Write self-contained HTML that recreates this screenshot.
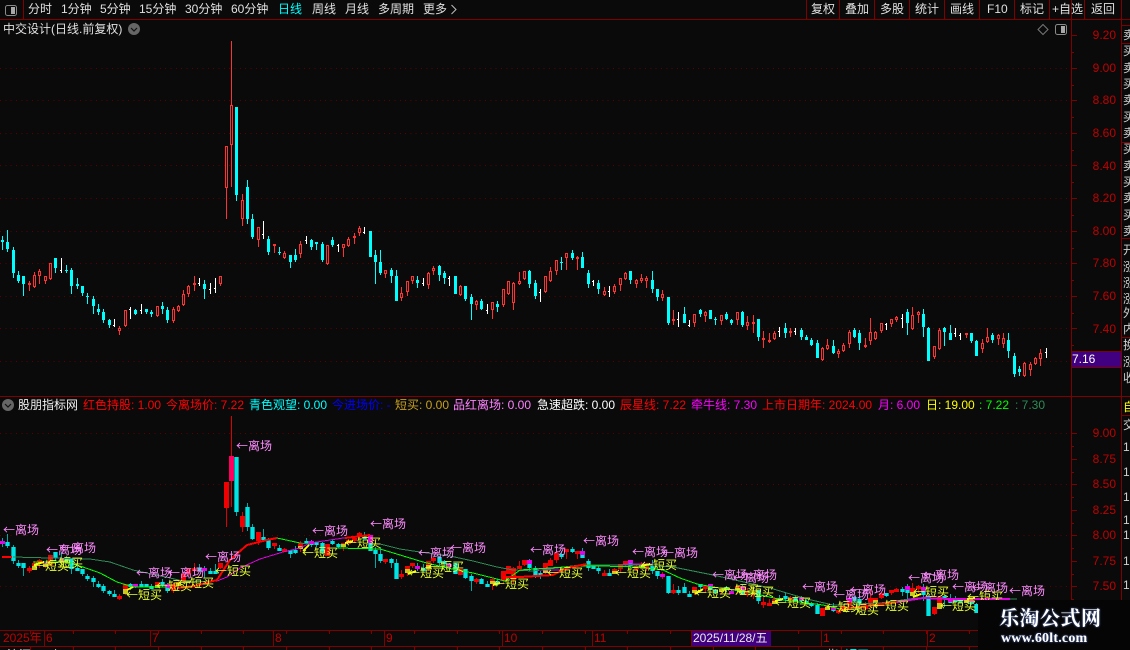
<!DOCTYPE html>
<html>
<head>
<meta charset="utf-8">
<style>
html,body{margin:0;padding:0;background:#0a0a0a;}
#p{position:relative;width:1130px;height:650px;overflow:hidden;background:#0a0a0a;font:12px/14px "Liberation Sans","WenQuanYi Zen Hei","Noto Sans CJK SC",sans-serif;color:#e0e0e0;}
#p svg{position:absolute;left:0;top:0;}
.t{position:absolute;white-space:nowrap;line-height:14px;}
.a{color:#c00000;text-align:right;width:30px;left:1086px;}
.l{color:#ff8cff;font-family:"WenQuanYi Zen Hei","Noto Sans CJK SC",sans-serif;}
.b{color:#e6ff30;font-family:"WenQuanYi Zen Hei","Noto Sans CJK SC",sans-serif;}
.z{color:#c00000;}
#rc{position:absolute;left:1122px;top:20px;width:8px;height:630px;overflow:hidden;color:#d0d0d0;}
#rc span{position:absolute;left:1px;line-height:14px;white-space:nowrap;}
#wm{position:absolute;left:978px;top:600px;width:152px;height:50px;background:#050505;}
</style>
</head>
<body>
<div id="p">
<svg id="s" width="1130" height="650" shape-rendering="crispEdges">
<g stroke="#5c0000" stroke-dasharray="1 4.33" fill="none">
<path d="M0 68.5H1070M0 100.5H1070M0 133.5H1070M0 165.5H1070M0 198.5H1070M0 231.5H1070M0 263.5H1070M0 296.5H1070M0 328.5H1070M0 361.5H1070M0 433.5H1070M0 484.5H1070M0 535.5H1070M0 586.5H1070"/>
</g>
<g id="cu"></g>
<g id="cl"></g>
<g fill="none">
<path stroke="#2e8b57" stroke-width="1" d="M13 557L50 558L90 559L110 562L133 570L170 578L187 582L217 581M277 538L300 543L310 544M380 544L400 549L420 552L450 556L473 561L497 567L513 570L533 571L580 565L593 565L640 565L673 567L713 575L757 585L770 588L807 599L833 605L880 603L917 598L1017 599"/>
<path stroke="#00ff00" stroke-width="1" d="M33 562L67 562L83 567L100 573L117 582L133 587L167 587M277 538L300 543M337 548L380 549L400 555L423 562L447 568L473 573L493 578L505 581L520 570L580 566L600 566L640 567L663 570L680 578L697 584L713 587L747 592L783 600L823 605L840 609M925 598L1010 600"/>
<path stroke="#e000e0" stroke-width="1" d="M217 581L227 577L240 568L260 559L283 552L300 548L310 543L350 537L367 535M537 570L560 570L567 568M623 564L653 564"/>
<path stroke="#e000e0" stroke-width="2" d="M897 602L923 598L950 599L1010 599"/>
<path stroke="#ff0000" stroke-width="2" d="M2 557L12 557M177 588L195 586L213 581L217 580L230 560L247 545L267 540L277 538M345 538L370 535M503 577L520 577L553 575L567 568L587 564M840 609L867 606L897 602"/>
<path stroke="#ffff00" stroke-width="2" d="M34 565L44 562M127 590L133 587M303 551L309 545M345 543L353 541M408 574L416 571M493 585L500 583M641 566L650 564M695 594L703 589M775 601L783 599M913 597L921 594M967 599L975 598"/>
</g>
<g fill="none" stroke="#800000">
<path d="M0 19.5H1130M23.5 0V19M806.5 0V19M839.5 0V19M874.5 0V19M909.5 0V19M944.5 0V19M979.5 0V19M1014.5 0V19M1049.5 0V19M1084.5 0V19M1121.5 0V650M1071.5 0V630M0 396.5H1130M0 630.5H1130M0 646.5H1130M44.5 630V646M150.5 630V646M273.5 630V646M384.5 630V646M502.5 630V646M592.5 630V646M691.5 630V646M821.5 630V646M927.5 630V646M1121 25.5H1130M1121 43.5H1130M1121 142.5H1130M1121 238.5H1130M1121 337.5H1130M1121 415.5H1130"/>
<path id="tk" d=""/>
</g>
<rect x="692" y="631" width="79" height="15" fill="#400080"/>
<rect x="1072" y="352" width="49" height="15" fill="#400080"/>
<path d="M1071 351.5H1121M1071 367.5H1121" stroke="#800000" fill="none"/>
<g shape-rendering="auto">
<rect x="5.5" y="5.5" width="11" height="10" rx="2" fill="none" stroke="#8a8a8a"/>
<rect x="11" y="7" width="4" height="7" fill="#a8a8a8"/>
<rect x="1055.5" y="24.5" width="11" height="10" rx="2" fill="none" stroke="#8a8a8a"/>
<rect x="1061" y="26" width="4" height="7" fill="#a8a8a8"/>
<path d="M1043 24.5L1048 29.5L1043 34.5L1038 29.5Z" fill="none" stroke="#777"/>
<circle cx="134" cy="29" r="6" fill="#666"/>
<path d="M131 28L134 31L137 28" fill="none" stroke="#111" stroke-width="1.2"/>
<circle cx="8" cy="405" r="6" fill="#666"/>
<path d="M5 404L8 407L11 404" fill="none" stroke="#111" stroke-width="1.2"/>
<path d="M451.5 5L456 9.5L451.5 14" fill="none" stroke="#bdbdbd"/>
</g>
</svg>

<!-- toolbar -->
<span class="t" style="left:28px;top:2px">分时</span>
<span class="t" style="left:61px;top:2px">1分钟</span>
<span class="t" style="left:100px;top:2px">5分钟</span>
<span class="t" style="left:139px;top:2px">15分钟</span>
<span class="t" style="left:185px;top:2px">30分钟</span>
<span class="t" style="left:231px;top:2px">60分钟</span>
<span class="t" style="left:278px;top:2px;color:#00ffff">日线</span>
<span class="t" style="left:312px;top:2px">周线</span>
<span class="t" style="left:345px;top:2px">月线</span>
<span class="t" style="left:378px;top:2px">多周期</span>
<span class="t" style="left:423px;top:2px">更多</span>
<span class="t" style="left:811px;top:2px">复权</span>
<span class="t" style="left:845px;top:2px">叠加</span>
<span class="t" style="left:880px;top:2px">多股</span>
<span class="t" style="left:915px;top:2px">统计</span>
<span class="t" style="left:950px;top:2px">画线</span>
<span class="t" style="left:987px;top:2px">F10</span>
<span class="t" style="left:1020px;top:2px">标记</span>
<span class="t" style="left:1052px;top:2px">+自选</span>
<span class="t" style="left:1091px;top:2px">返回</span>

<span class="t" style="left:3px;top:22px">中交设计(日线.前复权)</span>

<!-- upper axis -->
<span class="t a" style="top:28px">9.20</span>
<span class="t a" style="top:61px">9.00</span>
<span class="t a" style="top:93px">8.80</span>
<span class="t a" style="top:126px">8.60</span>
<span class="t a" style="top:159px">8.40</span>
<span class="t a" style="top:191px">8.20</span>
<span class="t a" style="top:224px">8.00</span>
<span class="t a" style="top:256px">7.80</span>
<span class="t a" style="top:289px">7.60</span>
<span class="t a" style="top:322px">7.40</span>
<span class="t" style="left:1072px;top:352px;color:#fff">7.16</span>

<!-- lower axis -->
<span class="t a" style="top:426px">9.00</span>
<span class="t a" style="top:452px">8.75</span>
<span class="t a" style="top:477px">8.50</span>
<span class="t a" style="top:503px">8.25</span>
<span class="t a" style="top:528px">8.00</span>
<span class="t a" style="top:554px">7.75</span>
<span class="t a" style="top:579px">7.50</span>

<!-- legend -->
<span class="t" style="left:18px;top:398px;color:#f0f0f0">股朋指标网</span>
<span class="t" style="left:83px;top:398px;color:#ff0000">红色持股: 1.00</span>
<span class="t" style="left:166px;top:398px;color:#ff0000">今离场价: 7.22</span>
<span class="t" style="left:249px;top:398px;color:#00ffff">青色观望: 0.00</span>
<span class="t" style="left:332px;top:398px;color:#0000ff">今进场价: -</span>
<span class="t" style="left:395px;top:398px;color:#c8a020">短买: 0.00</span>
<span class="t" style="left:453px;top:398px;color:#ff80ff">品红离场: 0.00</span>
<span class="t" style="left:537px;top:398px;color:#ffffff">急速超跌: 0.00</span>
<span class="t" style="left:620px;top:398px;color:#ff0000">辰星线: 7.22</span>
<span class="t" style="left:691px;top:398px;color:#ff00ff">牵牛线: 7.30</span>
<span class="t" style="left:762px;top:398px;color:#ff0000">上市日期年: 2024.00</span>
<span class="t" style="left:878px;top:398px;color:#ff00ff">月: 6.00</span>
<span class="t" style="left:926px;top:398px;color:#ffff00">日: 19.00</span>
<span class="t" style="left:979px;top:398px;color:#00ff00">: 7.22</span>
<span class="t" style="left:1015px;top:398px;color:#2e8b57">: 7.30</span>

<!-- leave labels -->
<span class="t l" style="left:236px;top:439px">←离场</span>
<span class="t l" style="left:3px;top:523px">←离场</span>
<span class="t l" style="left:46px;top:543px">←离场</span>
<span class="t l" style="left:60px;top:541px">←离场</span>
<span class="t l" style="left:136px;top:566px">←离场</span>
<span class="t l" style="left:168px;top:566px">←离场</span>
<span class="t l" style="left:205px;top:550px">←离场</span>
<span class="t l" style="left:312px;top:524px">←离场</span>
<span class="t l" style="left:370px;top:517px">←离场</span>
<span class="t l" style="left:418px;top:546px">←离场</span>
<span class="t l" style="left:450px;top:541px">←离场</span>
<span class="t l" style="left:530px;top:543px">←离场</span>
<span class="t l" style="left:583px;top:534px">←离场</span>
<span class="t l" style="left:632px;top:545px">←离场</span>
<span class="t l" style="left:662px;top:546px">←离场</span>
<span class="t l" style="left:712px;top:568px">←离场</span>
<span class="t l" style="left:733px;top:571px">←离场</span>
<span class="t l" style="left:741px;top:568px">←离场</span>
<span class="t l" style="left:802px;top:580px">←离场</span>
<span class="t l" style="left:833px;top:588px">←离场</span>
<span class="t l" style="left:850px;top:583px">←离场</span>
<span class="t l" style="left:908px;top:571px">←离场</span>
<span class="t l" style="left:923px;top:568px">←离场</span>
<span class="t l" style="left:952px;top:580px">←离场</span>
<span class="t l" style="left:972px;top:581px">←离场</span>
<span class="t l" style="left:1009px;top:584px">←离场</span>

<!-- buy labels -->
<span class="t b" style="left:33px;top:559px">←短买</span>
<span class="t b" style="left:47px;top:556px">←短买</span>
<span class="t b" style="left:126px;top:588px">←短买</span>
<span class="t b" style="left:156px;top:579px">←短买</span>
<span class="t b" style="left:178px;top:576px">←短买</span>
<span class="t b" style="left:215px;top:564px">←短买</span>
<span class="t b" style="left:302px;top:546px">←短买</span>
<span class="t b" style="left:345px;top:536px">←短买</span>
<span class="t b" style="left:408px;top:566px">←短买</span>
<span class="t b" style="left:428px;top:560px">←短买</span>
<span class="t b" style="left:493px;top:577px">←短买</span>
<span class="t b" style="left:547px;top:566px">←短买</span>
<span class="t b" style="left:615px;top:566px">←短买</span>
<span class="t b" style="left:641px;top:558px">←短买</span>
<span class="t b" style="left:695px;top:586px">←短买</span>
<span class="t b" style="left:723px;top:583px">←短买</span>
<span class="t b" style="left:738px;top:585px">←短买</span>
<span class="t b" style="left:775px;top:596px">←短买</span>
<span class="t b" style="left:826px;top:600px">←短买</span>
<span class="t b" style="left:843px;top:603px">←短买</span>
<span class="t b" style="left:873px;top:599px">←短买</span>
<span class="t b" style="left:913px;top:585px">←短买</span>
<span class="t b" style="left:940px;top:599px">←短买</span>
<span class="t b" style="left:967px;top:590px">←短买</span>

<!-- time axis -->
<span class="t z" style="left:3px;top:631px">2025年</span>
<span class="t z" style="left:46px;top:631px">6</span>
<span class="t z" style="left:152px;top:631px">7</span>
<span class="t z" style="left:275px;top:631px">8</span>
<span class="t z" style="left:386px;top:631px">9</span>
<span class="t z" style="left:504px;top:631px">10</span>
<span class="t z" style="left:594px;top:631px">11</span>
<span class="t" style="left:693px;top:631px;color:#e8e8e8">2025/11/28/五</span>
<span class="t z" style="left:823px;top:631px">1</span>
<span class="t z" style="left:929px;top:631px">2</span>
<span class="t" style="left:7px;top:648px;color:#d0d0d0">沪深</span>
<span class="t" style="left:50px;top:648px;color:#d0d0d0">上</span>
<span class="t" style="left:827px;top:648px;color:#d0d0d0">指</span>
<span class="t" style="left:845px;top:648px;color:#00ffff">短买</span>

<!-- right column -->
<div id="rc">
<span style="top:8px">卖</span><span style="top:24px">买</span><span style="top:41px">卖</span><span style="top:57px">买</span><span style="top:73px">卖</span><span style="top:90px">买</span><span style="top:106px">卖</span><span style="top:122px">买</span><span style="top:139px">卖</span><span style="top:155px">买</span><span style="top:171px">卖</span><span style="top:188px">买</span><span style="top:204px">卖</span><span style="top:223px">开</span><span style="top:240px">涨</span><span style="top:256px">涨</span><span style="top:272px">涨</span><span style="top:286px">外</span><span style="top:302px">内</span><span style="top:318px">换</span><span style="top:335px">涨</span><span style="top:351px">收</span>
<span style="top:380px;color:#ffff00">自</span><span style="top:398px">交</span>
<span style="top:420px">1</span><span style="top:445px">1</span><span style="top:470px">1</span><span style="top:493px">1</span><span style="top:508px">1</span><span style="top:534px">1</span><span style="top:558px">1</span>
</div>

<!-- watermark -->
<div id="wm"></div>
<span class="t" style="left:999px;top:607px;line-height:24px;font-family:'Liberation Serif','Noto Serif CJK SC',serif;font-weight:bold;font-size:20px;letter-spacing:.5px;color:#fff;text-shadow:0 0 2px #5a78c8">乐淘公式网</span>
<span class="t" style="left:1001px;top:632px;font-family:'Liberation Serif',serif;font-weight:bold;font-size:14px;letter-spacing:.2px;color:#fff;text-shadow:0 0 2px #5a78c8">www.60lt.com</span>
</div>

<script>
var D="c2,236,240,242,250;c7,230,242,249,252;c13,247,250,273,278;c18,271,275,281,283;c23,276,276,284,296;r29,281,283,285,291;r34,272,275,287,287;r39,269,271,276,284;r45,276,276,281,284;r50,263,263,279,280;c55,258,258,268,273;w61,258,270,271,273;c66,265,270,271,273;c71,268,270,286,294;c77,278,284,286,289;c82,286,286,293,296;c87,293,296,297,304;c93,296,299,306,314;c98,304,309,312,315;c103,309,312,320,323;c109,319,320,325,328;w114,319,325,326,327;r119,326,328,331,335;r125,310,310,326,327;w130,307,309,310,319;c135,309,310,314,315;w141,304,310,311,314;c146,309,309,312,314;c151,310,312,314,317;r157,306,306,316,316;c162,302,306,309,314;c167,307,310,320,323;r173,307,309,321,323;r178,305,306,311,312;r183,290,294,305,306;r188,285,286,294,297;r194,276,283,285,291;w199,278,283,284,286;c204,280,284,289,299;w210,283,289,290,294;w215,278,288,289,293;r220,276,276,284,286;r226,146,146,188,219;r231,41,105,145,187;c236,107,107,195,201;r242,194,200,219,226;c247,180,187,219,224;c252,214,219,237,239;r258,227,227,240,247;w263,221,234,235,239;c268,236,239,252,255;r274,244,244,246,253;c279,247,252,253,255;r284,251,253,258,258;c290,255,255,262,268;c295,249,255,260,262;r300,241,244,254,258;w306,236,240,241,244;c311,239,240,247,250;c316,242,242,244,250;c322,242,244,260,262;r327,245,245,264,264;c332,237,240,245,247;w338,244,245,246,252;r343,244,244,248,257;r348,237,239,246,246;r354,233,236,238,244;r359,226,228,233,236;w364,227,232,233,234;c370,231,231,257,257;c375,250,255,262,284;c380,250,262,273,275;r385,270,270,274,278;c391,268,270,276,283;c396,270,276,301,301;r401,287,293,298,301;r407,281,281,292,296;r412,276,276,281,284;c417,276,280,283,288;w423,278,283,284,286;r428,272,273,285,289;r433,266,268,271,275;c439,265,266,275,281;c444,271,273,278,284;w449,276,278,279,286;c455,276,276,294,294;r460,285,286,295,295;c465,286,286,299,301;c471,294,297,304,320;r476,300,301,305,310;c481,299,301,309,310;w487,304,310,311,314;r492,302,302,310,319;c497,301,304,307,312;r503,289,289,305,307;r508,281,281,294,294;r513,282,283,303,310;r519,272,281,284,284;r524,271,271,279,280;c529,270,271,284,288;c535,280,283,296,299;w540,289,292,293,302;r545,276,276,292,293;r550,267,271,281,281;r556,260,260,271,275;c561,257,262,263,270;r566,253,253,258,270;c572,250,253,258,260;r577,256,257,259,270;c582,252,257,268,268;c588,270,273,284,288;w593,280,281,282,286;c598,280,283,289,294;r604,287,291,295,296;w609,286,291,292,297;r614,284,286,292,294;r620,278,278,285,291;r625,272,273,279,280;c630,271,271,280,284;r636,279,280,284,288;r641,274,278,281,283;r646,276,278,281,288;c652,271,280,289,293;c657,289,289,297,301;r662,290,294,298,301;c668,297,297,323,325;r673,310,319,321,325;w678,312,319,320,327;c684,307,314,323,323;w689,320,325,326,327;r694,314,314,323,327;c700,309,310,314,317;r705,311,312,316,322;c710,310,310,319,319;c715,317,319,320,325;r721,315,315,321,325;c726,312,314,319,320;c731,319,320,323,325;r737,312,312,320,325;c742,311,312,325,327;r747,316,322,326,330;r753,315,322,324,333;c758,319,319,337,341;r763,331,338,340,348;r769,333,340,342,342;r774,331,333,339,339;w779,327,331,332,337;c785,323,328,333,338;r790,328,331,333,337;w795,328,331,332,335;c801,328,330,337,340;c806,335,337,340,340;c811,338,340,345,346;c817,340,343,358,358;r822,347,348,360,361;r827,339,345,349,350;c833,340,346,353,354;r838,349,351,354,358;r843,343,345,351,352;r849,330,332,344,348;c854,328,330,337,338;c859,330,333,343,350;r865,338,345,347,347;r870,318,332,341,345;r875,331,332,339,340;r881,323,323,331,333;w886,323,324,325,330;r891,319,319,324,327;r896,316,317,320,322;w902,314,318,319,328;c907,309,312,323,335;r912,307,315,329,329;r918,311,312,315,323;c923,309,314,327,337;c928,327,328,361,361;r934,346,346,357,359;r939,328,330,349,350;c944,327,328,332,346;c950,325,333,340,340;w955,328,333,334,337;w960,333,335,336,340;r966,333,333,335,338;c971,333,333,341,343;c976,340,341,356,356;r982,339,343,349,353;r987,328,337,342,343;c992,333,335,340,343;r998,334,335,339,345;r1003,333,338,344,348;c1008,333,340,351,358;c1014,353,356,374,377;c1019,366,369,372,376;r1024,362,363,376,377;r1030,362,364,370,376;r1035,357,358,364,364;r1040,349,353,359,366;w1046,348,352,353,358";
var U="",L="";
function R(x,y,w,h,f){return '<rect x="'+x+'" y="'+y+'" width="'+w+'" height="'+Math.max(h,1)+'" fill="'+f+'"/>';}
function M(y){return Math.round(535+(y-231)*0.6258);}
var leave=[3,46,60,136,168,205,312,370,418,450,530,583,632,662,712,733,741,802,833,850,908,923,952,972,1009];
var buy=[33,47,126,156,178,215,302,345,408,428,493,547,615,641,695,723,738,775,826,843,873,913,940,967];
D.split(";").forEach(function(s){
 var k=s[0],v=s.slice(1).split(",").map(Number),x=v[0],wt=v[1],bt=v[2],bb=v[3],wb=v[4];
 var red="#ff3232",lc=k=="c"?"#00ffff":k=="r"?red:"#ffffff";
 if(k=="c"){U+=R(x,wt,1,wb-wt,lc)+R(x-1,bt,3,bb-bt,lc);}
 else if(k=="w"){U+=R(x,wt,1,wb-wt,lc)+R(x-1,bt,1,1,lc);}
 else{
  U+=R(x,wt,1,bt-wt,lc)+R(x,bb,1,wb-bb,lc);
  if(bb-bt<=2)U+=R(x-1,bt,3,bb-bt,lc);
  else U+=R(x-1,bt,3,1,lc)+R(x-1,bb-1,3,1,lc)+R(x-1,bt,1,bb-bt,lc)+R(x+1,bt,1,bb-bt,lc);
 }
 var a=M(wt),b=M(bt),c=M(bb),d=M(wb),h=Math.max(c-b,3);
 var isr=k=="r";
 var lw=isr?"#e00000":"#00a8a8";
 L+=R(x,a,1,d-a,lw);
 if(isr){L+=R(x-2,b,5,h,"#f00000");}
 else{L+=R(x-2,b,5,h,"#009a9a")+R(x-1,b,3,h,"#00e4e4");}
 if(isr&&x==231)L+=R(x-2,b,5,h,"#ff0060");
 if(leave.some(function(q){return Math.abs(q-x)<=2;}))L+=R(x-2,b,5,Math.max(Math.ceil(h/2),3),"#e800e8");
 if(isr&&buy.some(function(q){return Math.abs(q-x)<=2;}))L+=R(x-2,b+Math.floor(h/2),5,Math.max(Math.ceil(h/2),3),"#c8c820");
});
document.getElementById("cu").innerHTML=U;
document.getElementById("cl").innerHTML=L;
var T="";
[35,68,100,133,165,198,231,263,296,328].forEach(function(y){T+="M1071 "+(y+.5)+"h6M1071 "+(y+17)+".5h3";});
[433,459,484,510,535,561,586].forEach(function(y){T+="M1071 "+(y+.5)+"h6M1071 "+(y+13)+".5h3";});
for(var i=0;i<25;i++){var x=30+i*42.67;T+="M"+(Math.round(x)+.5)+" 631v3M"+(Math.round(x)+.5)+" 646v4";}
document.getElementById("tk").setAttribute("d",T);
</script>
</body>
</html>
